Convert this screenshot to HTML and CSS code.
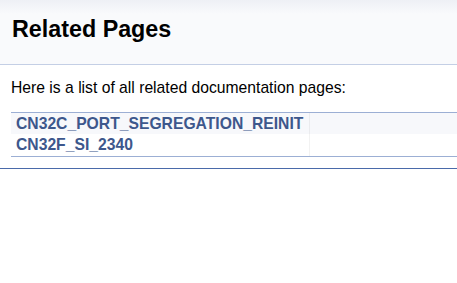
FILE: index.html
```
<!DOCTYPE html>
<html lang="en">
<head>
    <meta charset="UTF-8">
    <meta name="viewport" content="width=device-width, initial-scale=1.0">
    <title>Related Pages</title>
    <link rel="stylesheet" href="styles.css">
</head>
<body>
    <div class="header">
        <div class="title">Related Pages</div>
    </div>

    <div class="contents">
        <p class="intro">Here is a list of all related documentation pages:</p>
        <div class="directory">
            <table class="directory-table">
                <tr class="even">
                    <td class="entry"><a class="el" href="#">CN32C_PORT_SEGREGATION_REINIT</a></td>
                    <td class="desc"></td>
                </tr>
                <tr class="odd">
                    <td class="entry"><a class="el" href="#">CN32F_SI_2340</a></td>
                    <td class="desc"></td>
                </tr>
            </table>
        </div>
    </div>

    <hr class="footer">
</body>
</html>
```

FILE: styles.css
```
body {
    font-family: "Liberation Sans", Arial, sans-serif;
    font-size: 15.7px;
    color: #000;
    background-color: #fff;
    margin: 0;
    padding: 0;
}

.header {
    background-color: #f9fafc;
    background-image: linear-gradient(#eef0f5, #f9fafc 14px);
    border-bottom: 1px solid #c4cfe5;
    padding: 15px 0 21px 12px;
}

.title {
    font-size: 23.3px;
    font-weight: bold;
    line-height: 28px;
}

.contents {
    padding-top: 12px;
    margin-left: 11px;
}

.intro {
    margin: 0 0 13px 0;
    line-height: 22px;
}

.directory {
    border-top: 1px solid #9cafd4;
    border-bottom: 1px solid #9cafd4;
}

.directory-table {
    border-collapse: collapse;
    width: 100%;
}

.directory-table td {
    padding: 0;
    vertical-align: top;
}

.directory-table tr.even {
    background-color: #f7f8fb;
}

.directory-table tr.even td {
    height: 21px;
    line-height: 21px;
}

.directory-table tr.odd td {
    height: 22px;
    line-height: 22px;
}

.entry {
    white-space: nowrap;
    padding-left: 5px !important;
    padding-right: 6px !important;
}

.desc {
    width: 100%;
    border-left: 1px solid rgba(0, 0, 0, 0.05);
}

a.el {
    color: #3d578c;
    font-weight: bold;
    text-decoration: none;
}

hr.footer {
    margin: 11px 0 0 0;
    border: none;
    height: 1px;
    background-color: #4a6aaa;
}
```
